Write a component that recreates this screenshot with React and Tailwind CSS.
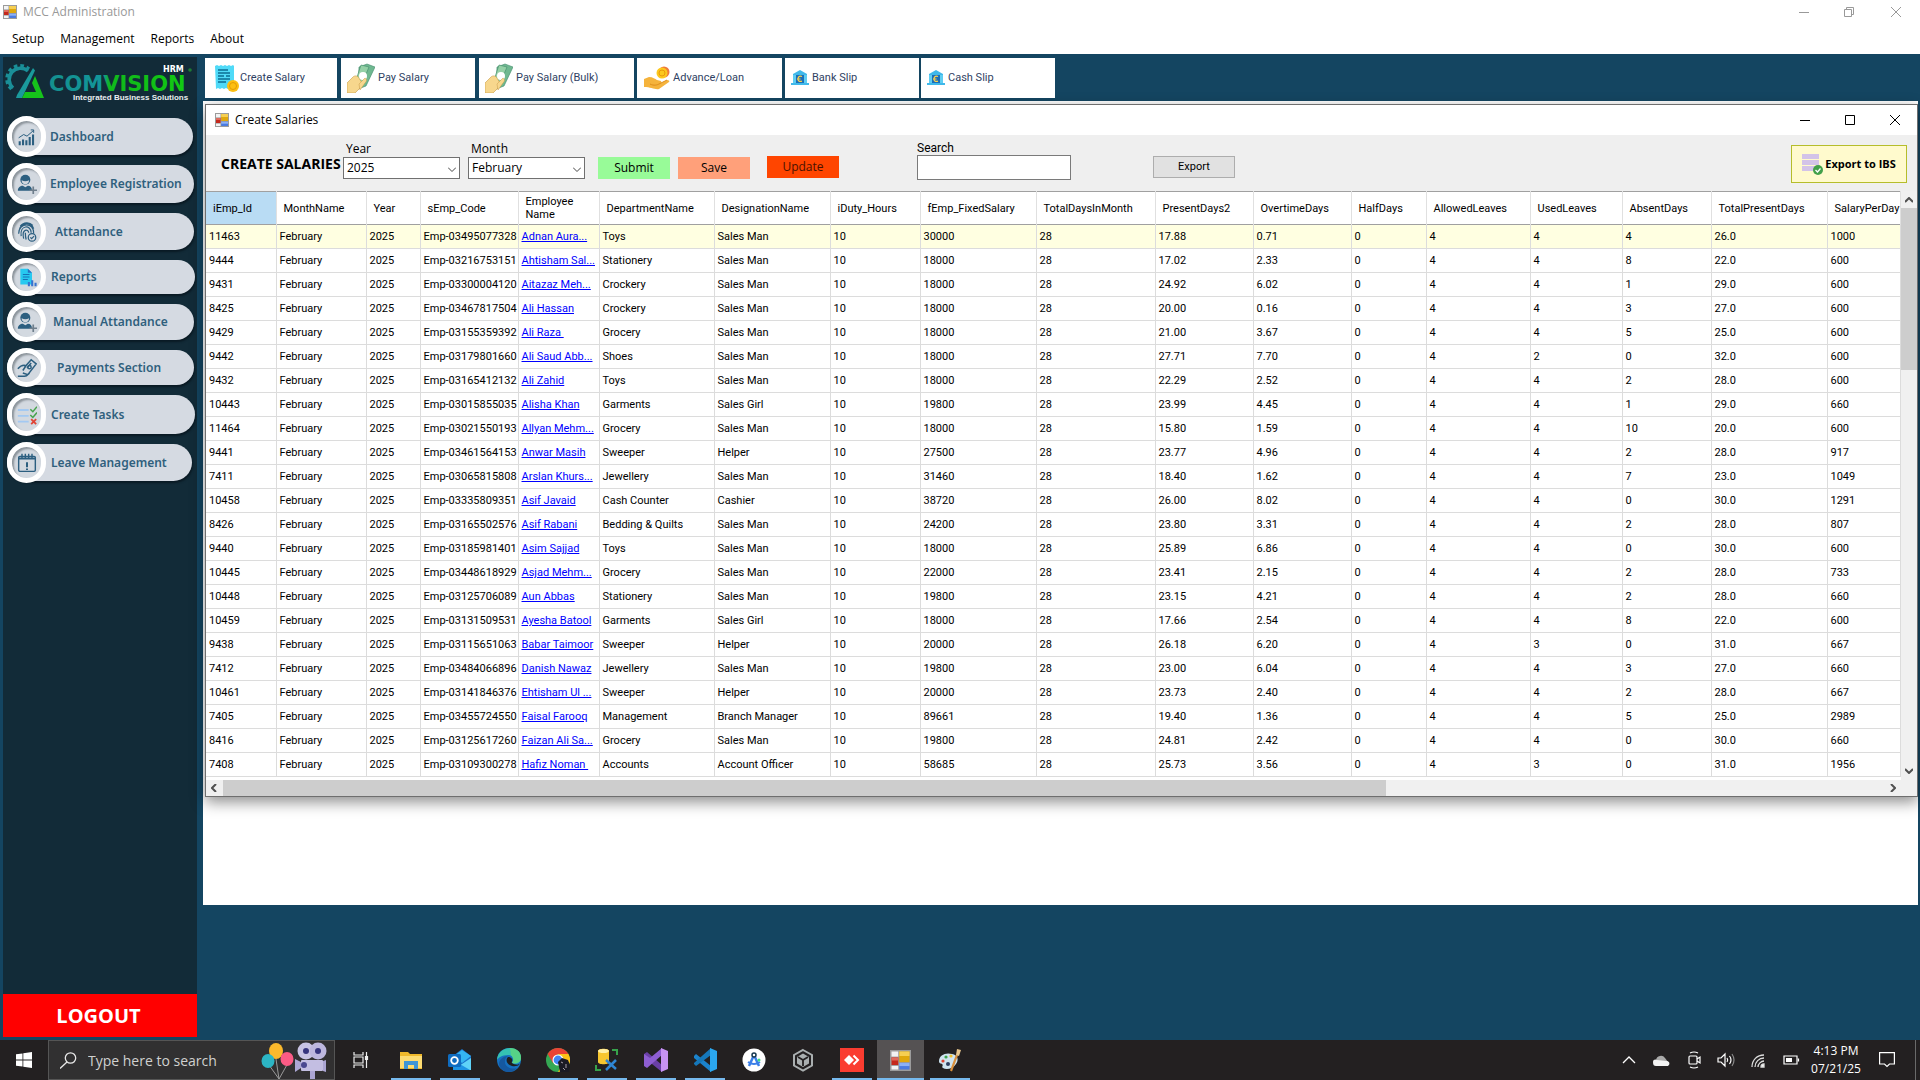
import React from "react";

const UI = "font-['Open_Sans','Noto_Sans',sans-serif]";
const GRID = "font-['Roboto','Liberation_Sans',Arial,sans-serif]";

const columns = [
  ["iEmp_Id", "w-[70px]"],
  ["MonthName", "w-[90px]"],
  ["Year", "w-[54px]"],
  ["sEmp_Code", "w-[98px]"],
  ["Employee Name", "w-[81px]"],
  ["DepartmentName", "w-[115px]"],
  ["DesignationName", "w-[116px]"],
  ["iDuty_Hours", "w-[90px]"],
  ["fEmp_FixedSalary", "w-[116px]"],
  ["TotalDaysInMonth", "w-[119px]"],
  ["PresentDays2", "w-[98px]"],
  ["OvertimeDays", "w-[98px]"],
  ["HalfDays", "w-[75px]"],
  ["AllowedLeaves", "w-[104px]"],
  ["UsedLeaves", "w-[92px]"],
  ["AbsentDays", "w-[89px]"],
  ["TotalPresentDays", "w-[116px]"],
  ["SalaryPerDay", ""],
];

const employees = [
  ["11463", "03495077328", "Adnan Aura...", "Toys", "Sales Man", "30000", "17.88", "0.71", "4", "4", "26.0", "1000"],
  ["9444", "03216753151", "Ahtisham Sal...", "Stationery", "Sales Man", "18000", "17.02", "2.33", "4", "8", "22.0", "600"],
  ["9431", "03300004120", "Aitazaz Meh...", "Crockery", "Sales Man", "18000", "24.92", "6.02", "4", "1", "29.0", "600"],
  ["8425", "03467817504", "Ali Hassan", "Crockery", "Sales Man", "18000", "20.00", "0.16", "4", "3", "27.0", "600"],
  ["9429", "03155359392", "Ali Raza ", "Grocery", "Sales Man", "18000", "21.00", "3.67", "4", "5", "25.0", "600"],
  ["9442", "03179801660", "Ali Saud Abb...", "Shoes", "Sales Man", "18000", "27.71", "7.70", "2", "0", "32.0", "600"],
  ["9432", "03165412132", "Ali Zahid", "Toys", "Sales Man", "18000", "22.29", "2.52", "4", "2", "28.0", "600"],
  ["10443", "03015855035", "Alisha Khan", "Garments", "Sales Girl", "19800", "23.99", "4.45", "4", "1", "29.0", "660"],
  ["11464", "03021550193", "Allyan Mehm...", "Grocery", "Sales Man", "18000", "15.80", "1.59", "4", "10", "20.0", "600"],
  ["9441", "03461564153", "Anwar Masih", "Sweeper", "Helper", "27500", "23.77", "4.96", "4", "2", "28.0", "917"],
  ["7411", "03065815808", "Arslan Khurs...", "Jewellery", "Sales Man", "31460", "18.40", "1.62", "4", "7", "23.0", "1049"],
  ["10458", "03335809351", "Asif Javaid", "Cash Counter", "Cashier", "38720", "26.00", "8.02", "4", "0", "30.0", "1291"],
  ["8426", "03165502576", "Asif Rabani", "Bedding & Quilts", "Sales Man", "24200", "23.80", "3.31", "4", "2", "28.0", "807"],
  ["9440", "03185981401", "Asim Sajjad", "Toys", "Sales Man", "18000", "25.89", "6.86", "4", "0", "30.0", "600"],
  ["10445", "03448618929", "Asjad Mehm...", "Grocery", "Sales Man", "22000", "23.41", "2.15", "4", "2", "28.0", "733"],
  ["10448", "03125706089", "Aun Abbas", "Stationery", "Sales Man", "19800", "23.15", "4.21", "4", "2", "28.0", "660"],
  ["10459", "03131509531", "Ayesha Batool", "Garments", "Sales Girl", "18000", "17.66", "2.54", "4", "8", "22.0", "600"],
  ["9438", "03115651063", "Babar Taimoor", "Sweeper", "Helper", "20000", "26.18", "6.20", "3", "0", "31.0", "667"],
  ["7412", "03484066896", "Danish Nawaz", "Jewellery", "Sales Man", "19800", "23.00", "6.04", "4", "3", "27.0", "660"],
  ["10461", "03141846376", "Ehtisham Ul ...", "Sweeper", "Helper", "20000", "23.73", "2.40", "4", "2", "28.0", "667"],
  ["7405", "03455724550", "Faisal Farooq", "Management", "Branch Manager", "89661", "19.40", "1.36", "4", "5", "25.0", "2989"],
  ["8416", "03125617260", "Faizan Ali Sa...", "Grocery", "Sales Man", "19800", "24.81", "2.42", "4", "0", "30.0", "660"],
  ["7408", "03109300278", "Hafiz Noman ", "Accounts", "Account Officer", "58685", "25.73", "3.56", "3", "0", "31.0", "1956"],
];

function FormIcon({ className }) {
  return (
    <svg viewBox="0 0 14 14" className={className} aria-hidden="true">
      <rect width="14" height="14" fill="#9b9b9b" />
      <rect x="1" y="1" width="4.5" height="3.4" fill="#f3f3f3" />
      <rect x="1" y="5" width="4.5" height="5" fill="#c5281c" />
      <rect x="1" y="5" width="4.5" height="2" fill="#e06a5c" />
      <rect x="1" y="10.6" width="4.5" height="2.4" fill="#f3f3f3" />
      <rect x="6.2" y="1" width="6.8" height="7" fill="#e0a80c" />
      <rect x="6.2" y="1" width="6.8" height="3" fill="#f6cf52" />
      <rect x="6.2" y="8.7" width="6.8" height="4.3" fill="#4b7be0" />
      <rect x="6.2" y="8.7" width="6.8" height="2" fill="#8db1f5" />
    </svg>
  );
}

const Minimize = () => (
  <svg viewBox="0 0 10 10" className="h-[10px] w-[10px]" stroke="currentColor" fill="none"><path d="M0 5.5h10" /></svg>
);
const Maximize = () => (
  <svg viewBox="0 0 10 10" className="h-[10px] w-[10px]" stroke="currentColor" fill="none"><path d="M.5.5h9v9h-9z" /></svg>
);
const Restore = () => (
  <svg viewBox="0 0 10 10" className="h-[10px] w-[10px]" stroke="currentColor" fill="none"><path d="M.5 2.5h7v7h-7zM2.5 2.5v-2h7v7h-2" /></svg>
);
const Close = () => (
  <svg viewBox="0 0 10 10" className="h-[10px] w-[10px]" stroke="currentColor" fill="none"><path d="M0 0l10 10M10 0L0 10" /></svg>
);

function Logo() {
  return (
    <svg viewBox="0 0 190 46" className="mt-[2px] ml-[2px] h-[46px] w-[190px]" role="img" aria-label="Comvision HRM">
      <defs>
        <linearGradient id="word" x1="0" x2="1">
          <stop offset="0" stopColor="#14908f" />
          <stop offset=".4" stopColor="#12969a" />
          <stop offset=".44" stopColor="#10b81c" />
          <stop offset="1" stopColor="#12c912" />
        </linearGradient>
      </defs>
      <g transform="translate(0 2)">
        <path d="M8 27A10 10 0 0 1 23 10" fill="none" stroke="#1a8f98" strokeWidth="3.500" />
        <path d="M6.500 28A12 12 0 0 1 24 8" fill="none" stroke="#1a8f98" strokeWidth="3.500" strokeDasharray="3.600 2.800" />
        <path d="M28 7l2 2.500L17 37h-6l1-3z" fill="#1a9a9c" />
        <path d="M30 15l9 22H17l3-6h11l-4-9z" fill="#16c41b" />
      </g>
      <text x="158" y="13" fontFamily="DejaVu Sans" fontWeight="700" fontSize="8" fill="#fff">HRM</text>
      <circle cx="185" cy="11" r="1.800" fill="#1d7a35" />
      <text x="44" y="32" fontFamily="DejaVu Sans" fontWeight="700" fontSize="21" fill="url(#word)">COMVISION</text>
      <text x="68" y="41" fontFamily="Liberation Sans" fontWeight="700" fontSize="8" fill="#e9eef0">Integrated Business Solutions</text>
    </svg>
  );
}

const navIcons = {
  chart: (
    <g fill="#2c5f80">
      <path d="M2 17h2.500v5H2zM6 15h2.500v7H6zM10 16h2.500v6H10zM14 12h2.500v10H14zM18 9h2.500v13H18z" />
      <path d="M2 13l6-4 4 2 8-7M16.500 3.500H20V7" fill="none" stroke="#2c5f80" strokeWidth="1.200" />
    </g>
  ),
  user: (
    <g fill="#2c5f80">
      <circle cx="10" cy="7" r="6" />
      <path d="M5.500 7.500c3 1.500 6 1.500 9 0 0 3-2 5-4.500 5s-4.500-2-4.500-5z" fill="#cfd6de" />
      <path d="M1 20c0-4 3-6 6-6l3 2 3-2c3 0 5 2 5 6z" />
      <path d="M19.500 15v9M15 19.500h9" stroke="#6f7f8c" strokeWidth="2" />
    </g>
  ),
  finger: (
    <g fill="none" stroke="#2c5f80" strokeWidth="1.500">
      <path d="M3 8c4-8 14-8 17 0M2 14c0-14 19-14 18 0M5 17c-2-14 12-14 12-4M8 20C5 8 14 8 14 13M11 21c-1-3-1-5-1-8M4 5c4-5 11-5 15-1" />
      <circle cx="18" cy="18.500" r="4.500" fill="#d5dae1" />
      <path d="M16 18.500l1.500 1.500 3-3" />
    </g>
  ),
  report: (
    <g>
      <path d="M4 2h9l5 5v14H4z" fill="#27c9f0" />
      <path d="M13 2v5h5z" fill="#2a6fc0" />
      <path d="M7 9h8M7 12h8M7 15h6" stroke="#1673b8" strokeWidth="1.300" />
      <path d="M13 18h2.500v5H13zM17 16h2.500v7H17zM21 19h2.500v4H21z" fill="#3673d0" />
    </g>
  ),
  pay: (
    <g fill="none" stroke="#2c5f80" strokeWidth="1.800">
      <path d="M9 11l8-9 6 5-10 13-6-2M1 13c5-6 8-4 10-4l-4 6M1 22h8c3 0 4-2 6-4M12 12l5-6" />
      <circle cx="15" cy="11" r="2" />
    </g>
  ),
  tasks: (
    <g fill="none" strokeWidth="2.200">
      <path d="M1 6h13M1 13h13M1 20h13" stroke="#a3c9f2" />
      <path d="M16 5l3 3 5-6M16 12l3 3 5-6" stroke="#45a34b" strokeWidth="1.800" />
      <path d="M17 17l6 6M23 17l-6 6" stroke="#e04435" />
    </g>
  ),
  leave: (
    <g fill="none" stroke="#2c5f80" strokeWidth="1.700">
      <rect x="2" y="4" width="20" height="18" rx="1.500" />
      <path d="M2 6.500h20M12 11v6M12 18.500v2" strokeWidth="2.400" />
      <path d="M6 1v5M10 1v5M14 1v5M18 1v5" />
    </g>
  ),
};

const nav = [
  ["Dashboard", "chart", "h-[37px] w-[186px]", "pl-[43px]"],
  ["Employee Registration", "user", "h-[38px] w-[187px]", "pl-[43px]"],
  ["Attandance", "finger", "h-[37px] w-[187px]", "pl-[48px]"],
  ["Reports", "report", "h-[34px] w-[188px]", "pl-[44px]"],
  ["Manual Attandance", "user", "h-[36px] w-[187px]", "pl-[46px]"],
  ["Payments Section", "pay", "h-[35px] w-[187px]", "pl-[50px]"],
  ["Create Tasks", "tasks", "h-[39px] w-[188px]", "pl-[44px]"],
  ["Leave Management", "leave", "h-[37px] w-[185px]", "pl-[44px]"],
];

function Sidebar() {
  return (
    <aside className="flex w-[194px] shrink-0 flex-col bg-[#122b38]">
      <Logo />
      <nav className="mt-[13px] flex flex-1 flex-col gap-[10px] pl-[4px]">
        {nav.map(([label, icon, size, pad]) => (
          <button
            key={label}
            type="button"
            className={`relative flex shrink-0 items-center rounded-full bg-[#d5dae2] text-left text-[12px] font-semibold whitespace-nowrap text-[#2f607d] shadow-[1px_2px_2px_#0a1a24] ${size} ${pad} font-['Noto_Sans','Open_Sans',sans-serif]`}
          >
            <span className="absolute -top-[2px] -bottom-[2px] left-0 flex w-[39px] items-center justify-center rounded-full border-[5px] border-white bg-[#d3d9e0] shadow-[inset_2px_2px_2px_#8d959c]">
              <svg viewBox="0 0 24 24" className="h-[20px] w-[20px]" aria-hidden="true">{navIcons[icon]}</svg>
            </span>
            {label}
          </button>
        ))}
      </nav>
      <button type="button" className="h-[43px] bg-[#ff0000] pr-[3px] text-[20px] font-bold text-white font-['Open_Sans',sans-serif]">
        LOGOUT
      </button>
    </aside>
  );
}

const DocIcon = () => (
  <svg viewBox="0 0 26 30" className="h-[30px] w-[26px]" aria-hidden="true">
    <path d="M1 3l2-1 2 1 2-1 2 1 2-1 2 1 2-1 2 1 2-1 1 1v22l-2 1-2-1-2 1-2-1-2 1-2-1-2 1-2-1-2 1z" fill="#4fdaf8" />
    <path d="M4 7h10M4 10h12M4 13h6M12 13h4M4 16h12M4 19h8" stroke="#0d6e92" strokeWidth="1.300" />
    <circle cx="19" cy="23" r="6" fill="#fdbf12" />
    <circle cx="19" cy="23" r="3.500" fill="none" stroke="#e39c06" />
  </svg>
);
const CashIcon = () => (
  <svg viewBox="0 0 28 30" className="h-[30px] w-[28px]" aria-hidden="true">
    <g transform="translate(0 1)">
      <path d="M12 3l8-3 8 3-9 19-8 3z" fill="#6fb890" stroke="#3f8a69" strokeWidth=".6" />
      <path d="M14 1l8 2-8 19-6-3z" fill="#94d0a6" stroke="#3f8a69" strokeWidth=".6" />
      <path d="M0 19l6-6c2-2 5-1 6 1l3 5-2 5-5 5H0z" fill="#f7d78d" stroke="#c99a45" strokeWidth=".6" />
      <circle cx="16" cy="12" r="4" fill="#fff" />
      <path d="M12 20l6-6c2 1 2 3 0 5l-5 7z" fill="#f7d78d" stroke="#c99a45" strokeWidth=".5" />
    </g>
  </svg>
);
const LoanIcon = () => (
  <svg viewBox="0 0 26 24" className="h-[24px] w-[26px]" aria-hidden="true">
    <circle cx="20" cy="6" r="5.500" fill="#ef7a3c" />
    <circle cx="18" cy="7" r="5.500" fill="#fcc81d" />
    <circle cx="18" cy="7" r="3" fill="none" stroke="#ea9a0a" />
    <path d="M0 13l5-2c4 0 6 2 8 3l4 1c1 2 0 3-2 3l8-4c2 0 3 1 2 2l-10 7c-4 1-8-2-15-2z" fill="#f5b33c" />
    <path d="M6 18c4 2 7 1 9 0l8-4" fill="none" stroke="#dd8d1c" />
  </svg>
);
const BankIcon = () => (
  <svg viewBox="0 0 18 16" className="h-[16px] w-[18px]" aria-hidden="true">
    <path d="M2 4l7-4 7 4v1H2zM0 13h18v2H0z" fill="#3fb8ea" />
    <path d="M2 5h14v8H2z" fill="#5ecdf2" />
    <path d="M5 5h8v8H5z" fill="#1c6fb8" />
    <path d="M11 6.500c-3-1-4 1-4 2.500s1 3 4 2.200M6 9h3.500" fill="none" stroke="#ffd24a" strokeWidth="1.200" />
  </svg>
);

const tabs = [
  ["Create Salary", DocIcon, "w-[132px] pl-[9px]"],
  ["Pay Salary", CashIcon, "w-[134px] ml-[4px] pl-[6px] gap-[3px]"],
  ["Pay Salary (Bulk)", CashIcon, "w-[155px] ml-[4px] pl-[6px] gap-[3px]"],
  ["Advance/Loan", LoanIcon, "w-[145px] ml-[3px] pl-[7px] gap-[3px]"],
  ["Bank Slip", BankIcon, "w-[134px] ml-[3px] pl-[6px] gap-[3px]"],
  ["Cash Slip", BankIcon, "w-[134px] ml-[2px] pl-[6px] gap-[3px]"],
];

function Combo({ id, label, value, options }) {
  return (
    <div className="flex flex-col">
      <label htmlFor={id} className="pl-[3px] text-[12px] leading-[16px]">{label}</label>
      <div className="relative">
        <select id={id} defaultValue={value} className="block h-[22px] w-[117px] appearance-none border border-[#707070] bg-white pl-[3px] text-[12px] leading-[18px]">
          {options.map((o) => <option key={o}>{o}</option>)}
        </select>
        <svg viewBox="0 0 8 5" className="pointer-events-none absolute top-[10px] right-[4px] h-[5px] w-[8px]" fill="none" stroke="#444"><path d="M0 .5l4 4 4-4" /></svg>
      </div>
    </div>
  );
}

function SalaryWindow() {
  return (
    <section className="mt-[3px] ml-[2px] border border-[#6e6e6e] bg-[#efefef] shadow-[0_5px_14px_rgba(0,0,0,0.45)]">
      <header className="flex h-[30px] items-center bg-white pl-[9px] text-[12px]">
        <FormIcon className="mr-[6px] h-[14px] w-[14px]" />
        <h1 className="flex-1">Create Salaries</h1>
        <button type="button" aria-label="Minimize" className="flex w-[45px] justify-center"><Minimize /></button>
        <button type="button" aria-label="Maximize" className="flex w-[46px] justify-center"><Maximize /></button>
        <button type="button" aria-label="Close" className="flex w-[44px] justify-center"><Close /></button>
      </header>

      <form className="flex h-[56px] items-end pb-[12px] pl-[15px]" onSubmit={(e) => e.preventDefault()}>
        <h2 className="w-[122px] pb-[5px] text-[14px] leading-[20px] font-bold whitespace-nowrap font-['Open_Sans',sans-serif]">CREATE SALARIES</h2>
        <Combo id="year" label="Year" value="2025" options={["2024", "2025"]} />
        <div className="ml-[8px]"><Combo id="month" label="Month" value="February" options={["January", "February", "March"]} /></div>
        <button type="submit" className="ml-[13px] h-[22px] w-[72px] bg-[#98fb98] text-[12px]">Submit</button>
        <button type="button" className="ml-[8px] h-[22px] w-[72px] bg-[#ffa07a] text-[12px]">Save</button>
        <button type="button" className="mb-[1px] ml-[17px] h-[22px] w-[72px] bg-[#ff4500] text-[12px] text-[#4a1200]">Update</button>
        <div className={`ml-[78px] flex flex-col ${GRID}`}>
          <label htmlFor="search" className="text-[12px] leading-[14px]">Search</label>
          <input id="search" type="text" className="-mb-[1px] h-[25px] w-[154px] border border-[#7a7a7a] bg-white px-1 text-[12px]" />
        </div>
        <button type="button" className={`mb-[1px] ml-[82px] h-[22px] w-[82px] border border-[#adadad] bg-[#e1e1e1] text-[11px] ${GRID}`}>Export</button>
        <button type="button" className="-mb-[4px] ml-auto mr-[10px] flex h-[38px] w-[116px] items-center justify-center gap-[2px] border border-[#b5bd2b] bg-[#fffacd] text-[11px] font-bold whitespace-nowrap">
          <svg viewBox="0 0 21 22" className="h-[22px] w-[21px]" aria-hidden="true">
            <path d="M0 1h17v5H0zM0 7h17v5H0zM0 13h17v5H0z" fill="#d3c3e8" />
            <circle cx="16" cy="17" r="5" fill="#43a04a" />
            <path d="M13.500 17l2 2 3-3.500" fill="none" stroke="#fff" strokeWidth="1.300" />
          </svg>
          Export to IBS
        </button>
      </form>

      <div className="flex">
        <div className={`h-[589px] min-w-0 flex-1 overflow-hidden bg-white text-[11px] text-black ${GRID}`}>
          <table className="w-full table-fixed border-collapse">
            <thead>
              <tr className="h-[33px] border-t border-b border-[#a0a0a0] leading-[13px]">
                {columns.map(([name, width], i) => (
                  <th key={name} scope="col" className={`border-r border-r-[#e0e0e0] pl-[7px] text-left font-normal ${name === "Employee Name" ? "pr-[10px]" : "pr-0 whitespace-nowrap"} ${width} ${i === 0 ? "bg-[#b9dcf4]" : ""}`}>
                    {name}
                  </th>
                ))}
              </tr>
            </thead>
            <tbody>
              {employees.map(([id, code, name, dept, desig, salary, present, over, used, absent, total, perDay], r) => (
                <tr key={id} className={`h-[24px] border-b border-[#dcdcdc] ${r === 0 ? "bg-[#ffffe1]" : ""}`}>
                  {[id, "February", "2025", `Emp-${code}`, name, dept, desig, "10", salary, "28", present, over, "0", "4", used, absent, total, perDay].map((v, c) => (
                    <td key={c} className="overflow-hidden border-r border-[#dcdcdc] pt-[1px] pr-0 pb-0 pl-[3px] leading-[16px] whitespace-pre">
                      {c === 4 ? <a href="#employee" className="text-[#0000ff] underline">{v}</a> : v}
                    </td>
                  ))}
                </tr>
              ))}
            </tbody>
          </table>
        </div>
        <div className="flex w-[16px] shrink-0 flex-col items-center bg-[#f0f0f0]">
          <svg viewBox="0 0 8 6" className="mt-[6px] h-[6px] w-[8px]" fill="none" stroke="#505050" strokeWidth="2"><path d="M0 5l4-4 4 4" /></svg>
          <div className="mt-[5px] h-[162px] w-full bg-[#cdcdcd]" />
          <svg viewBox="0 0 8 6" className="mt-auto mb-[6px] h-[6px] w-[8px]" fill="none" stroke="#505050" strokeWidth="2"><path d="M0 1l4 4 4-4" /></svg>
        </div>
      </div>
      <div className="flex h-[16px] items-center bg-[#f0f0f0] pr-[21px] pl-[5px]">
        <svg viewBox="0 0 6 8" className="h-[8px] w-[6px]" fill="none" stroke="#505050" strokeWidth="2"><path d="M5 0L1 4l4 4" /></svg>
        <div className="ml-[6px] mr-[5px] flex h-full flex-1">
          <div className="h-full w-[70%] bg-[#cdcdcd]" />
        </div>
        <svg viewBox="0 0 6 8" className="h-[8px] w-[6px]" fill="none" stroke="#505050" strokeWidth="2"><path d="M1 0l4 4-4 4" /></svg>
      </div>
    </section>
  );
}

const apps = [
  {
    name: "File Explorer", open: true, art: (
      <g><path d="M1 4h8l2 2h12v15H1z" fill="#f0b92c" /><path d="M1 8h22v12H1z" fill="#fddc73" /><path d="M5 13h14v8h-4v-4H9v4H5z" fill="#3f95d5" /></g>
    ),
  },
  {
    name: "Outlook", open: true, art: (
      <g><path d="M5 8l9-7 9 7v14H5z" fill="#1a73c9" /><path d="M6 8l8-6 9 6-9 7z" fill="#35b5f2" /><path d="M5 22l18-12v12z" fill="#5fd3f8" /><path d="M5 12l17 10H5z" fill="#1e94e4" /><rect x="0" y="6" width="13" height="13" rx="1.500" fill="#0f6cc0" /><circle cx="6.500" cy="12.500" r="3.300" fill="none" stroke="#fff" strokeWidth="1.800" /></g>
    ),
  },
  {
    name: "Edge", open: false, art: (
      <g><circle cx="12" cy="12" r="12" fill="#1670c0" /><path d="M0 12C1-3 24-4 24 10c0 5-5 7-9 5 3-4 0-8-4-8-6 0-10 3-11 5z" fill="#35c1b2" /><path d="M13 0c8 0 12 6 11 11-1 4-6 5-9 4 2-3 1-6-1-8z" fill="#5fd67c" opacity=".8" /><path d="M8 13c-1 5 5 9 12 7-6 7-17 4-18-4 0-5 5-8 9-8-2 1-3 3-3 5z" fill="#1558a0" /><path d="M11 9c-3 3-1 8 4 9 3 .6 6 0 8-2-1 1-6 1-8-1-1-1 1-2 0-4-1-1.500-2-2-4-2z" fill="#201f1f" /></g>
    ),
  },
  {
    name: "Chrome", open: true, art: (
      <g><circle cx="12" cy="12" r="12" fill="#35a853" /><path d="M1.600 6A12 12 0 0 1 22.400 6H12L7 15z" fill="#ea4335" /><path d="M22.400 6A12 12 0 0 1 12 24l5-9-5-9z" fill="#fbc116" /><circle cx="12" cy="12" r="5.500" fill="#fff" /><circle cx="12" cy="12" r="4.400" fill="#4285f4" /><path d="M12 14l4-4 6 2 2 5-1 7h-9z" fill="#1b1b24" /><path d="M15 14l2 1M20 16v4M17 20l2 2" stroke="#a7a0a8" /></g>
    ),
  },
  {
    name: "SQL Server Management Studio", open: true, art: (
      <g><path d="M3 3c0-3 11-3 11 0v11c0 3-11 3-11 0z" fill="#f7c62f" /><ellipse cx="8.500" cy="3" rx="5.500" ry="2" fill="#fff0a8" /><path d="M17 2h5v5M1 17v5h5" fill="none" stroke="#37a24b" strokeWidth="2" /><path d="M11 12l10 9M21 12l-10 10" stroke="#2f86d4" strokeWidth="2.500" /></g>
    ),
  },
  {
    name: "Visual Studio", open: true, art: (
      <g><path d="M0 6l3-2 15 13V24L3 12 0 18z" fill="#6a3fa6" /><path d="M0 18l3 2L18 7V0L6 10 0 6z" fill="#8e5ed2" /><path d="M17 0l7 3v18l-7 3z" fill="#c792f2" /></g>
    ),
  },
  {
    name: "Visual Studio Code", open: true, art: (
      <g><path d="M1 8l2-2 15 12v6L1 10z" fill="#1b83cc" /><path d="M1 16l2 2L18 7V0L1 15z" fill="#1577ba" /><path d="M17 0l7 3v18l-7 3z" fill="#2ba7ef" /></g>
    ),
  },
  {
    name: "Android Studio", open: false, art: (
      <g><circle cx="12" cy="12" r="11.500" fill="#fff" /><path d="M12 7L7 18M12 7l5 11" stroke="#3b7fe8" strokeWidth="2.500" /><path d="M6 14q6 4 12 0" fill="none" stroke="#3b7fe8" strokeWidth="2" /><circle cx="12" cy="7" r="2" fill="#fff" stroke="#16384f" strokeWidth="1.500" /><circle cx="17" cy="12" r="1.500" fill="#3ddc84" /></g>
    ),
  },
  {
    name: "Unity Hub", open: false, art: (
      <g fill="none" stroke="#aaafb0" strokeWidth="2"><path d="M12 2l9 5v10.500L12 22.500l-9-5V7z" /><path d="M12 5.500l6 3.500v6.500L12 19l-6-3.500V9z" fill="#aaafb0" stroke="none" /><path d="M12 18v-6l5-3M12 12L7 9" stroke="#232021" strokeWidth="1.800" /></g>
    ),
  },
  {
    name: "AnyDesk", open: true, art: (
      <g><rect width="24" height="24" fill="#fa3c30" /><path d="M9 7l5 5-5 5-5-5z" fill="#fff" /><path d="M13.500 7.500L18 12l-4.500 4.500" fill="none" stroke="#fff" strokeWidth="2" /></g>
    ),
  },
  { name: "MCC Administration", open: true, active: true, art: null },
  {
    name: "Paint", open: true, art: (
      <g><path d="M1 13c0-6 7-9 13-7 6 1 7 6 4 10-3 5-10 6-13 4-2-1 1-3-1-4-1-1-3 0-3-3z" fill="#cfe4f0" /><circle cx="5" cy="13" r="1.600" fill="#e0442f" /><circle cx="8" cy="9" r="1.600" fill="#3da34d" /><circle cx="13" cy="8" r="1.600" fill="#f3bf2a" /><circle cx="10" cy="16" r="2" fill="#2d3f60" /><path d="M13 23l6-16" stroke="#d9903d" strokeWidth="2.200" /><path d="M18 7l1-6 4 1-2 6z" fill="#e8c58c" /></g>
    ),
  },
];

function Taskbar() {
  return (
    <footer className="flex h-[40px] shrink-0 items-stretch bg-[#232021] text-white">
      <button type="button" aria-label="Start" className="flex w-[48px] items-center justify-center">
        <svg viewBox="0 0 16 16" className="h-[16px] w-[16px]" fill="#fff"><path d="M0 2.300L6.500 1.400v6.200H0zM7.300 1.300L16 0v7.600H7.300zM0 8.400h6.500v6.200L0 13.700zM7.300 8.400H16V16l-8.700-1.300z" /></svg>
      </button>
      <label className="flex w-[287px] items-center border border-[#555] bg-[#313031] pl-[11px]">
        <svg viewBox="0 0 17 17" className="h-[17px] w-[17px]" fill="none" stroke="#e8e8e8" strokeWidth="1.300"><circle cx="10.500" cy="6" r="5.200" /><path d="M7 10L0 16.500" /></svg>
        <input type="text" aria-label="Search" placeholder="Type here to search" className="ml-[11px] w-[158px] bg-transparent text-[14px] placeholder:text-[#d0d0d0]" />
        <svg viewBox="0 0 66 38" className="ml-auto mr-[7px] h-[38px] w-[66px]" aria-hidden="true">
          <path d="M15 18l3 20M8 24l10 14M27 22l-9 16" stroke="#9a9a9a" fill="none" />
          <ellipse cx="15" cy="10" rx="7" ry="8" fill="#fbb92c" /><ellipse cx="7" cy="20" rx="6.500" ry="7" fill="#2cb5c4" /><ellipse cx="26" cy="18" rx="6.500" ry="7" fill="#fb5b85" />
          <circle cx="45" cy="10" r="8.500" fill="#c9c4e4" /><circle cx="57" cy="10" r="8.500" fill="#bdb7de" />
          <circle cx="45" cy="10" r="3" fill="#37357e" /><circle cx="57" cy="10" r="3" fill="#37357e" />
          <rect x="40" y="19" width="22" height="11" rx="1" fill="#c3bee2" /><path d="M34 18l6 3v6l-6 4zM62 20l3-1v12l-3-1zM49 30h5v8h-5z" fill="#aca6d4" /><circle cx="43" cy="24" r="3" fill="#4a4890" />
        </svg>
      </label>
      <button type="button" aria-label="Task View" className="flex w-[51px] items-center justify-center">
        <svg viewBox="0 0 16 16" className="h-[16px] w-[16px]" fill="none" stroke="#eee" strokeWidth="1.200"><path d="M1 0v3h9V0M1 16v-3h9v3M1 5h9v6H1zM13.500 0v16" /><path d="M12.500 4.500h2v3h-2z" fill="#eee" /></svg>
      </button>
      <ul className="flex">
        {apps.map((a) => (
          <li key={a.name} className="flex w-[49px] justify-center">
            <button type="button" aria-label={a.name} className={`flex flex-col items-center justify-end ${a.active ? "w-[47px] bg-[#555253]" : "w-[40px]"}`}>
              {a.art ? <svg viewBox="0 0 24 24" className="mb-[6px] h-[24px] w-[24px]">{a.art}</svg> : <FormIcon className="mb-[7px] h-[21px] w-[21px]" />}
              <span className={`h-[2px] w-full ${a.open ? "bg-[#76b9ed]" : ""}`} />
            </button>
          </li>
        ))}
      </ul>
      <div className="ml-auto flex items-center">
        <div className="flex w-[194px] items-center justify-around" aria-hidden="true">
          <svg viewBox="0 0 20 20" className="h-[20px] w-[20px]" fill="none" stroke="#fff" strokeWidth="1.300"><path d="M4 13l6-6 6 6" /></svg>
          <svg viewBox="0 0 20 20" className="h-[20px] w-[20px]"><path d="M5 10a5 5 0 0 1 9-2l3 4H5z" fill="#a9a9a9" /><path d="M2 12c0-3 3-3 4-2l9 1c3 0 4 2 3 4-1 1-1 1-3 1H5c-2 0-3-1-3-4z" fill="#f3f3f3" /></svg>
          <svg viewBox="0 0 20 20" className="h-[20px] w-[20px]" fill="none" stroke="#fff" strokeWidth="1.200"><rect x="5" y="6" width="8" height="8" rx="1" /><path d="M13 9l3-2v6l-3-2M6 3q4-2 8 0M6 17q4 2 8 0" /></svg>
          <svg viewBox="0 0 20 20" className="h-[20px] w-[20px]" fill="none" stroke="#fff" strokeWidth="1.200"><path d="M2 8h3l4-4v12l-4-4H2zM11 8q1.500 2 0 4M13.500 6q3 4 0 8" /><path d="M16 4q4 6 0 12" stroke="#888" /></svg>
          <svg viewBox="0 0 20 20" className="h-[20px] w-[20px]" fill="none" stroke="#ddd" strokeWidth="1.300"><path d="M4 17C4 10 9 5 16 5M7 17c0-5 4-9 9-9M10 17c0-3 3-6 6-6" /><path d="M13 17q0-3 3-3v3z" fill="#fff" /></svg>
          <svg viewBox="0 0 20 20" className="h-[20px] w-[20px]" fill="none" stroke="#fff" strokeWidth="1.200"><path d="M3 6h13v8H3zM17.500 8.500v3" /><path d="M5 8h6v4H5z" fill="#fff" stroke="none" /></svg>
        </div>
        <div className="w-[58px] text-center text-[12px] leading-[18px] whitespace-nowrap">
          <div>4:13 PM</div>
          <div>07/21/25</div>
        </div>
        <button type="button" aria-label="Notifications" className="ml-[14px] mr-[20px] flex">
          <svg viewBox="0 0 16 16" className="h-[16px] w-[16px]" fill="none" stroke="#fff" strokeWidth="1.200"><path d="M.6.600h14.800v11.400H10.500L8 14.500 5.500 12H.6z" /></svg>
        </button>
        <span className="mr-[4px] h-full w-px bg-[#6a6a6a]" />
      </div>
    </footer>
  );
}

export default function App() {
  return (
    <div className={`flex min-h-screen flex-col bg-[#144561] text-black ${UI}`}>
      <header className="bg-white pb-[3px] text-[12px]">
        <div className="flex h-[24px] items-center pl-[3px] text-[#999]">
          <FormIcon className="mr-[6px] h-[14px] w-[14px]" />
          <span className="flex-1">MCC Administration</span>
          <button type="button" aria-label="Minimize" className="flex w-[45px] justify-center"><Minimize /></button>
          <button type="button" aria-label="Restore" className="flex w-[45px] justify-center"><Restore /></button>
          <button type="button" aria-label="Close" className="flex w-[49px] justify-center"><Close /></button>
        </div>
        <nav className="flex h-[27px] items-center gap-[16px] pt-[3px] pl-[12px]">
          {["Setup", "Management", "Reports", "About"].map((m) => (
            <button key={m} type="button">{m}</button>
          ))}
        </nav>
      </header>

      <div className="flex flex-1 items-stretch pt-[3px] pb-[3px] pl-[3px]">
        <Sidebar />
        <main className="mr-[2px] ml-[6px] min-w-0 flex-1">
          <div className={`flex h-[44px] items-start pt-[1px] pl-[2px] ${GRID}`}>
            {tabs.map(([label, Icon, cls]) => (
              <button key={label} type="button" className={`flex h-[40px] items-center bg-white text-[11px] whitespace-nowrap text-[#2f3f63] ${cls}`}>
                <Icon />
                {label}
              </button>
            ))}
          </div>
          <div className="flow-root bg-white pb-[108px]">
            <SalaryWindow />
          </div>
        </main>
      </div>

      <Taskbar />
    </div>
  );
}
